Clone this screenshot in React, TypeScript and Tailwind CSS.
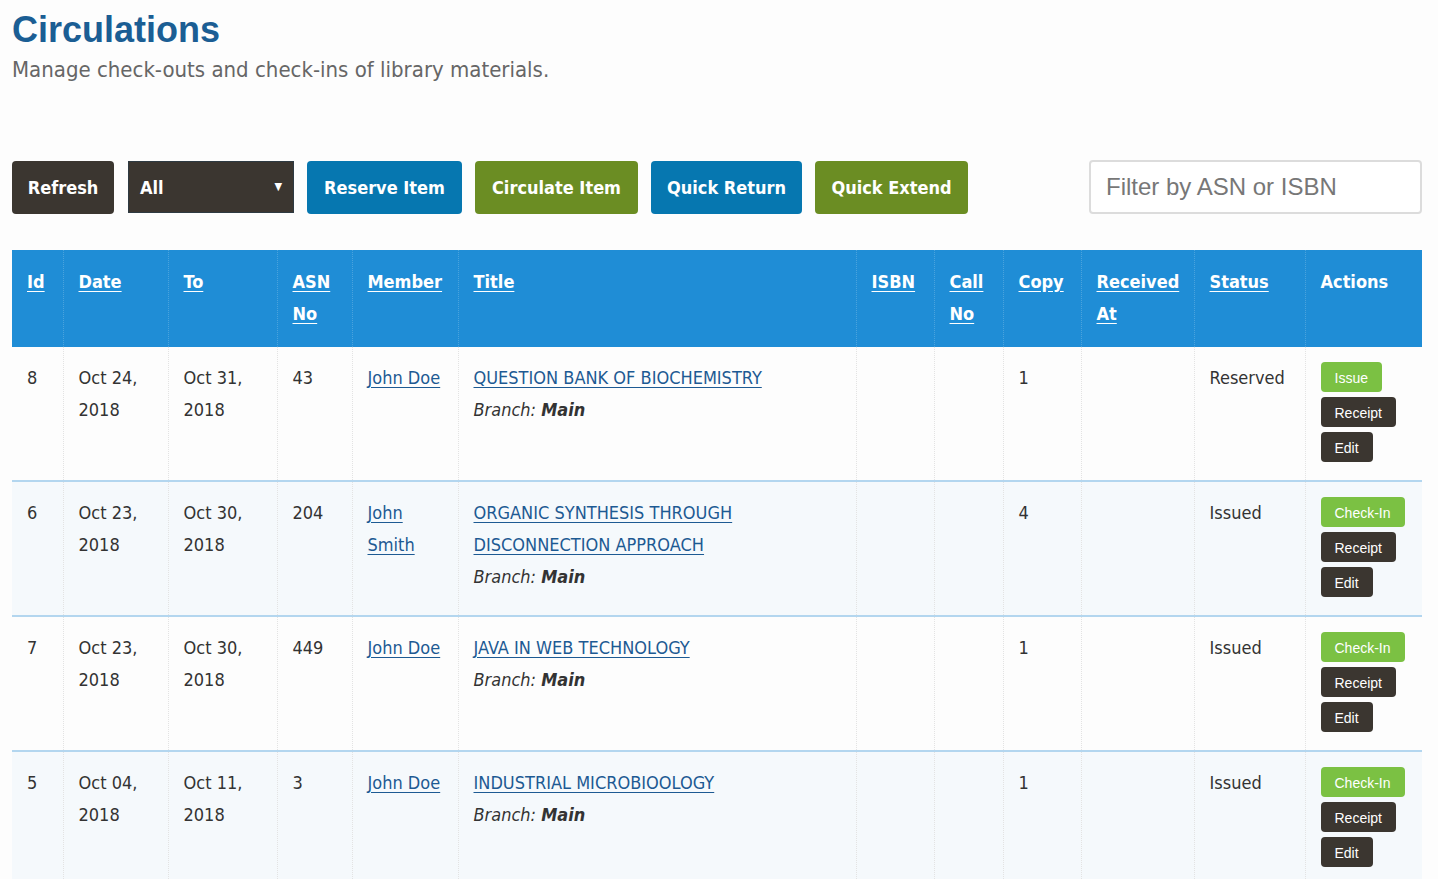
import React from 'react';

const rows = [
  { id: 8, date: ['Oct 24,', '2018'], to: ['Oct 31,', '2018'], asn: '43', member: 'John Doe', title: 'QUESTION BANK OF BIOCHEMISTRY', copy: '1', status: 'Reserved', primary: 'Issue' },
  { id: 6, date: ['Oct 23,', '2018'], to: ['Oct 30,', '2018'], asn: '204', member: 'John Smith', title: 'ORGANIC SYNTHESIS THROUGH DISCONNECTION APPROACH', copy: '4', status: 'Issued', primary: 'Check-In' },
  { id: 7, date: ['Oct 23,', '2018'], to: ['Oct 30,', '2018'], asn: '449', member: 'John Doe', title: 'JAVA IN WEB TECHNOLOGY', copy: '1', status: 'Issued', primary: 'Check-In' },
  { id: 5, date: ['Oct 04,', '2018'], to: ['Oct 11,', '2018'], asn: '3', member: 'John Doe', title: 'INDUSTRIAL MICROBIOOLOGY', copy: '1', status: 'Issued', primary: 'Check-In' },
];

const columns = [
  { label: 'Id', w: 'w-[51px]' },
  { label: 'Date', w: 'w-[105px]' },
  { label: 'To', w: 'w-[109px]' },
  { label: 'ASN No', w: 'w-[75px]' },
  { label: 'Member', w: 'w-[106px]' },
  { label: 'Title', w: 'w-[398px]' },
  { label: 'ISBN', w: 'w-[78px]' },
  { label: 'Call No', w: 'w-[69px]' },
  { label: 'Copy', w: 'w-[78px]' },
  { label: 'Received At', w: 'w-[113px]' },
  { label: 'Status', w: 'w-[111px]' },
  { label: 'Actions', w: 'w-[117px]' },
];

const body = "font-['DejaVu_Sans_Condensed','DejaVu_Sans',sans-serif]";
const arial = "font-['Liberation_Sans',Arial,sans-serif]";

function TopButton({ children, color, w }: { children: React.ReactNode; color: string; w: string }) {
  return (
    <button className={`h-[53px] ${w} rounded-[4px] text-white font-bold text-[18px] ${color} ${body}`}>
      {children}
    </button>
  );
}

function SmallButton({ children, color }: { children: React.ReactNode; color: string }) {
  return (
    <button className={`h-[30px] px-[14px] rounded-[4px] text-white text-[14px] ${color} ${arial}`}>
      {children}
    </button>
  );
}

export default function App() {
  return (
    <div className={`min-h-screen bg-[#fdfdfd] px-3 text-[#333] ${body}`}>
      <div className="w-[1410px]">
        <h1 className={`pt-[8px] text-[36px] leading-[44px] font-bold text-[#1b5e94] ${arial}`}>Circulations</h1>
        <p className="mt-[4px] text-[22px] leading-[28px] text-[#666]">Manage check-outs and check-ins of library materials.</p>

        <div className="mt-[76px] flex items-center">
          <TopButton color="bg-[#3b3630]" w="w-[102px]">Refresh</TopButton>
          <div className="ml-[14px] h-[52px] w-[166px] flex items-center justify-between bg-[#3b3630] border border-[#2e3a42] px-[11px] text-white font-bold text-[18px]">
            <span>All</span>
            <span className="text-[11px]">▼</span>
          </div>
          <div className="ml-[13px] flex gap-[13px]">
            <TopButton color="bg-[#0677b0]" w="w-[155px]">Reserve Item</TopButton>
            <TopButton color="bg-[#6b8d23]" w="w-[163px]">Circulate Item</TopButton>
            <TopButton color="bg-[#0677b0]" w="w-[151px]">Quick Return</TopButton>
            <TopButton color="bg-[#6b8d23]" w="w-[153px]">Quick Extend</TopButton>
          </div>
          <div className="ml-auto w-[333px] h-[54px] border-2 border-[#dcdcdc] rounded-[4px] bg-white flex items-center px-[15px]">
            <span className={`text-[24px] text-[#777] ${arial}`}>Filter by ASN or ISBN</span>
          </div>
        </div>

        <table className="mt-[36px] w-[1410px] table-fixed border-collapse text-[18px] leading-[32px]">
          <thead>
            <tr className="bg-[#1f8dd6] text-white font-bold align-top">
              {columns.map((c, i) => (
                <th
                  key={c.label}
                  className={`${c.w} text-left pl-[15px] pr-[6px] pt-[16px] pb-[17px] font-bold ${i > 0 ? 'border-l border-dotted border-l-[#4aa3dd]' : ''}`}
                >
                  {c.label === 'Actions' ? c.label : <span className="underline underline-offset-[3px]">{c.label}</span>}
                </th>
              ))}
            </tr>
          </thead>
          <tbody>
            {rows.map((r, idx) => {
              const td = (first = false) =>
                `pl-[15px] pr-[6px] pt-[15px] pb-[18px] ${first ? '' : 'border-l border-dotted border-l-[#e3e3e3]'}`;
              return (
                <tr
                  key={r.id}
                  className={`align-top ${idx % 2 === 0 ? 'bg-[#fdfdfd]' : 'bg-[#f5f9fc]'} ${idx > 0 ? 'border-t-2 border-t-[#b3d6ef]' : ''}`}
                >
                  <td className={td(true)}>{r.id}</td>
                  <td className={td()}>{r.date[0]}<br />{r.date[1]}</td>
                  <td className={td()}>{r.to[0]}<br />{r.to[1]}</td>
                  <td className={td()}>{r.asn}</td>
                  <td className={td()}>
                    <a className="text-[#1d5a93] underline underline-offset-[3px]">{r.member}</a>
                  </td>
                  <td className={td()}>
                    <a className="text-[#1d5a93] underline underline-offset-[3px]">{r.title}</a>
                    <div className="italic">
                      Branch: <span className="font-bold">Main</span>
                    </div>
                  </td>
                  <td className={td()}></td>
                  <td className={td()}></td>
                  <td className={td()}>{r.copy}</td>
                  <td className={td()}></td>
                  <td className={td()}>{r.status}</td>
                  <td className={td()}>
                    <div className="flex flex-col items-start gap-[5px]">
                      <SmallButton color="bg-[#7bc143]">{r.primary}</SmallButton>
                      <SmallButton color="bg-[#3b3630]">Receipt</SmallButton>
                      <SmallButton color="bg-[#3b3630]">Edit</SmallButton>
                    </div>
                  </td>
                </tr>
              );
            })}
          </tbody>
        </table>
      </div>
    </div>
  );
}
